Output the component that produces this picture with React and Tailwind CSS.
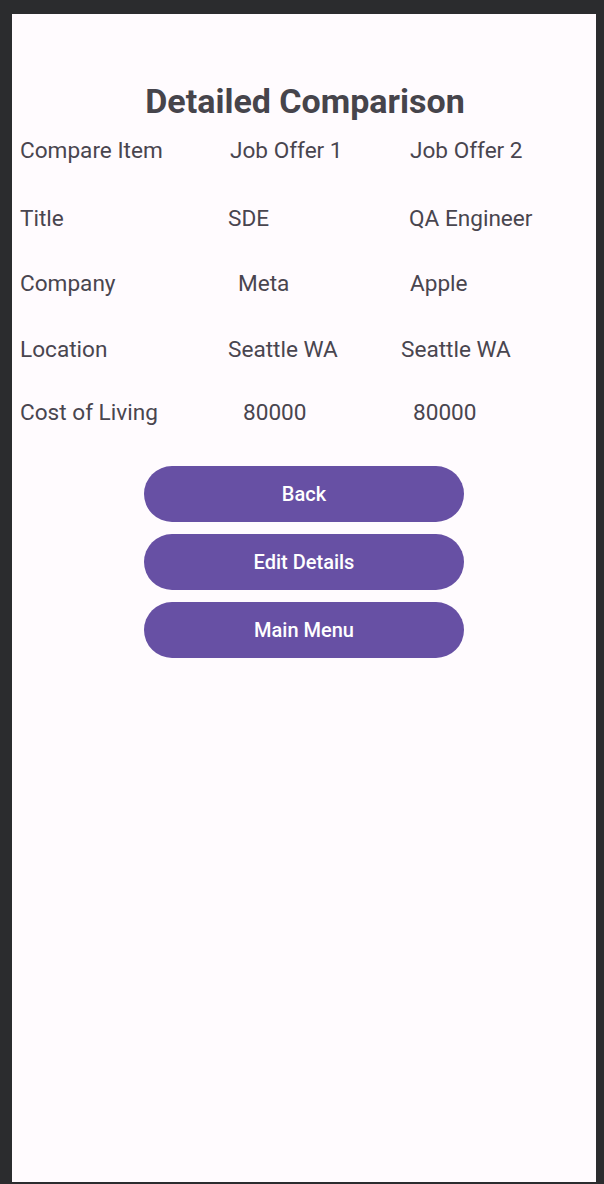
import React from "react";

const rows = [
  { h: "h-[68px]", a: "Compare Item", b: "Job Offer 1", c: "Job Offer 2", pb: "pl-[2px]", pc: "pl-[9px]" },
  { h: "h-[65px]", a: "Title", b: "SDE", c: "QA Engineer", pb: "pl-0", pc: "pl-[8px]" },
  { h: "h-[66px]", a: "Company", b: "Meta", c: "Apple", pb: "pl-[10px]", pc: "pl-[9px]" },
  { h: "h-[63px]", a: "Location", b: "Seattle WA", c: "Seattle WA", pb: "pl-0", pc: "pl-0" },
  { h: "h-[28px]", a: "Cost of Living", b: "80000", c: "80000", pb: "pl-[15px]", pc: "pl-[12px]" },
];

export default function App() {
  return (
    <div className="h-[1184px] w-[604px] bg-[#2b2c2e] pl-[12px] pr-[8px] pt-[14px] pb-[2px] font-['Roboto',sans-serif]">
      <div className="h-full bg-[#fffbfe] flex flex-col">
        <h1 className="mt-[67px] text-center text-[34px] leading-[40px] font-bold text-[#46444b] pl-[2px]">
          Detailed Comparison
        </h1>
        <div className="mt-[16px] pl-2 text-[22.6px] leading-[28px] text-[#49454f]">
          {rows.map((r, i) => (
            <div key={i} className={`grid grid-cols-[208px_173px_1fr] ${r.h}`}>
              <div>{r.a}</div>
              <div className={r.pb}>{r.b}</div>
              <div className={r.pc}>{r.c}</div>
            </div>
          ))}
        </div>
        <div className="mt-[39px] flex flex-col items-center gap-3">
          {["Back", "Edit Details", "Main Menu"].map((t) => (
            <button
              key={t}
              className="w-[320px] h-[56px] rounded-full bg-[#6750a4] text-white text-[20px] font-medium"
            >
              {t}
            </button>
          ))}
        </div>
      </div>
    </div>
  );
}
